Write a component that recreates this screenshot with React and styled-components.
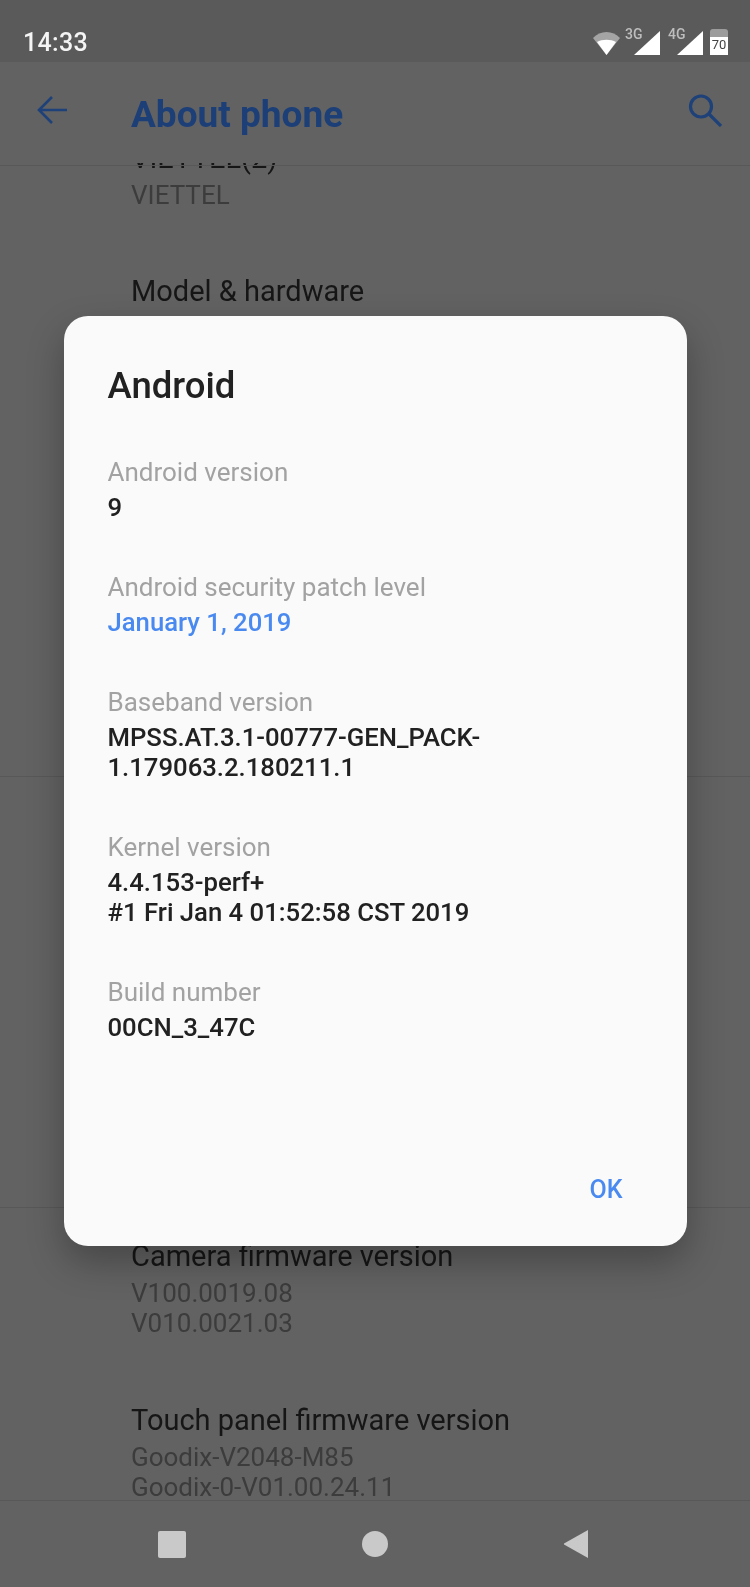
import React from 'react';
import styled, { createGlobalStyle } from 'styled-components';

const GlobalStyle = createGlobalStyle`
  html, body {
    margin: 0;
    padding: 0;
    background: #626262;
  }
  * {
    box-sizing: border-box;
  }
`;

const versionInfo = [
  { label: 'Android version', lines: ['9'] },
  { label: 'Android security patch level', lines: ['January 1, 2019'], link: true },
  { label: 'Baseband version', lines: ['MPSS.AT.3.1-00777-GEN_PACK-', '1.179063.2.180211.1'] },
  { label: 'Kernel version', lines: ['4.4.153-perf+', '#1 Fri Jan 4 01:52:58 CST 2019'] },
  { label: 'Build number', lines: ['00CN_3_47C'] },
];

const App = () => (
  <Screen>
    <GlobalStyle />
    <StatusBar>
      <Clock>14:33</Clock>
      <StatusIcons>
        <svg width="27" height="23" viewBox="0 0 27 23">
          <path d="M0 6 C7 -2 20 -2 27 6 L13.5 23 Z" fill="#a4a4a4" />
          <path d="M4 10 C9 7 18 7 23 10 L13.5 23 Z" fill="#fff" />
        </svg>
        <Signal label="3G" gap={7} />
        <Signal label="4G" gap={10} />
        <Battery>
          <BatteryLevel>70</BatteryLevel>
        </Battery>
      </StatusIcons>
    </StatusBar>
    <AppBar>
      <svg width="30" height="28" viewBox="0 0 30 28" fill="none" stroke="#1d4178" strokeWidth="2.6">
        <path d="M30 14 H2 M15 1 L2 14 L15 27" />
      </svg>
      <Title>About phone</Title>
      <svg width="34" height="33" viewBox="0 0 34 33" fill="none" stroke="#1d4178" strokeWidth="3.2">
        <circle cx="13" cy="12.5" r="10.5" />
        <path d="M21 20 L33 32" />
      </svg>
    </AppBar>
    <List>
      <Row $first>
        <RowTitle>VIETTEL(2)</RowTitle>
        <RowSub>VIETTEL</RowSub>
      </Row>
      <Row $short>
        <RowTitle>Model &amp; hardware</RowTitle>
      </Row>
      <Spacer $height={400} />
      <Spacer $height={431} />
      <Row>
        <RowTitle>Camera firmware version</RowTitle>
        <RowSub>V100.0019.08</RowSub>
        <RowSub>V010.0021.03</RowSub>
      </Row>
      <Row>
        <RowTitle>Touch panel firmware version</RowTitle>
        <RowSub>Goodix-V2048-M85</RowSub>
        <RowSub>Goodix-0-V01.00.24.11</RowSub>
      </Row>
    </List>
    <NavBar>
      <NavSquare />
      <NavCircle />
      <svg width="28" height="30" viewBox="2 0 28 30">
        <path d="M1 15 L26 1 V29 Z" fill="#c9c9c9" />
      </svg>
    </NavBar>
    <Overlay>
      <Dialog>
        <DialogTitle>Android</DialogTitle>
        {versionInfo.map((item) => (
          <InfoGroup key={item.label}>
            <InfoLabel>{item.label}</InfoLabel>
            {item.lines.map((line) => (
              <InfoValue key={line} $link={item.link}>
                {line}
              </InfoValue>
            ))}
          </InfoGroup>
        ))}
        <DialogActions>
          <OkButton>OK</OkButton>
        </DialogActions>
      </Dialog>
    </Overlay>
  </Screen>
);

const Signal = ({ label, gap }) => (
  <SignalWrap $gap={gap}>
    <SignalLabel>{label}</SignalLabel>
    <svg width="26" height="24" viewBox="0 0 26 24">
      <path d="M0 24 L26 0 V24 Z" fill="#fff" />
    </svg>
  </SignalWrap>
);

export default App;

const Screen = styled.div`
  position: relative;
  display: flex;
  flex-direction: column;
  width: 750px;
  height: 1587px;
  overflow: hidden;
  background: #626262;
  font-family: Roboto, 'Liberation Sans', sans-serif;
  filter: blur(0.7px);
`;

const StatusBar = styled.div`
  display: flex;
  align-items: flex-end;
  justify-content: space-between;
  flex: none;
  height: 62px;
  padding: 0 22px 7px 23px;
  background: #5a5a5a;
`;

const Clock = styled.span`
  color: #f4f4f4;
  font-size: 25px;
  font-weight: 500;
  line-height: 24px;
  letter-spacing: 0.3px;
`;

const StatusIcons = styled.div`
  display: flex;
  align-items: flex-end;
  gap: 7px;
`;

const SignalWrap = styled.div`
  position: relative;
  display: flex;
  margin-left: ${(props) => props.$gap}px;
`;

const SignalLabel = styled.span`
  position: absolute;
  top: -2px;
  left: -9px;
  color: #bdbdbd;
  font-size: 14px;
  font-weight: 500;
  line-height: 10px;
`;

const Battery = styled.div`
  position: relative;
  width: 18px;
  height: 26px;
  border-radius: 3px 3px 0 0;
  background: linear-gradient(#9c9c9c 0 8px, #fff 8px);
`;

const BatteryLevel = styled.span`
  position: absolute;
  top: 9px;
  left: 0;
  right: 0;
  color: #444;
  font-size: 13px;
  line-height: 13px;
  text-align: center;
`;

const AppBar = styled.div`
  position: relative;
  z-index: 1;
  display: flex;
  align-items: center;
  flex: none;
  height: 101px;
  padding: 0 28px 5px 37px;
  background: #626262;
  &::after {
    content: '';
    position: absolute;
    top: 103px;
    left: 0;
    right: 0;
    height: 1px;
    background: #585858;
  }
`;

const Title = styled.h1`
  flex: 1;
  margin: 0 0 0 64px;
  padding-top: 9px;
  color: #1c3f78;
  font-size: 37px;
  font-weight: 700;
  line-height: 40px;
`;

const List = styled.div`
  flex: 1;
  min-height: 0;
  overflow: hidden;
`;

const Row = styled.div`
  height: ${(props) => (props.$short ? '134px' : props.$first ? '133px' : '164px')};
  margin-top: ${(props) => (props.$first ? '-53px' : '0')};
  padding: 30px 0 0 131px;
`;

const RowTitle = styled.div`
  margin-bottom: 4px;
  color: #161616;
  font-size: 29px;
  line-height: 36px;
`;

const RowSub = styled.div`
  color: #3c3c3c;
  font-size: 26px;
  line-height: 30px;
`;

const Spacer = styled.div`
  height: ${(props) => props.$height}px;
  border-bottom: 1px solid #585858;
`;

const NavBar = styled.div`
  display: flex;
  align-items: center;
  justify-content: center;
  flex: none;
  gap: 176px;
  height: 87px;
  border-top: 1px solid #585858;
  background: #626262;
`;

const NavSquare = styled.div`
  width: 28px;
  height: 27px;
  border-radius: 2px;
  background: #c9c9c9;
`;

const NavCircle = styled.div`
  width: 26px;
  height: 26px;
  border-radius: 50%;
  background: #c9c9c9;
`;

const Overlay = styled.div`
  position: absolute;
  z-index: 2;
  top: 62px;
  left: 0;
  right: 0;
  bottom: 87px;
  display: flex;
  align-items: center;
  justify-content: center;
`;

const Dialog = styled.div`
  display: flex;
  flex-direction: column;
  width: 623px;
  height: 930px;
  padding: 49px 44px 0 44px;
  border-radius: 24px;
  background: #fafafa;
  box-shadow: 0 16px 36px rgba(0, 0, 0, 0.28);
`;

const DialogTitle = styled.h2`
  margin: 0 0 45px 0;
  color: #212121;
  font-size: 36.5px;
  font-weight: 500;
  line-height: 42px;
`;

const InfoGroup = styled.div`
  margin-bottom: 45px;
`;

const InfoLabel = styled.div`
  color: #a2a2a2;
  font-size: 26px;
  line-height: 40px;
`;

const InfoValue = styled.div`
  color: ${(props) => (props.$link ? '#4a8af0' : '#212121')};
  font-size: 25.7px;
  font-weight: 500;
  line-height: 30px;
`;

const DialogActions = styled.div`
  display: flex;
  justify-content: flex-end;
  margin-top: auto;
  padding: 0 20px 41px 0;
`;

const OkButton = styled.span`
  color: #4a8af0;
  font-size: 25px;
  font-weight: 500;
  line-height: 30px;
`;
